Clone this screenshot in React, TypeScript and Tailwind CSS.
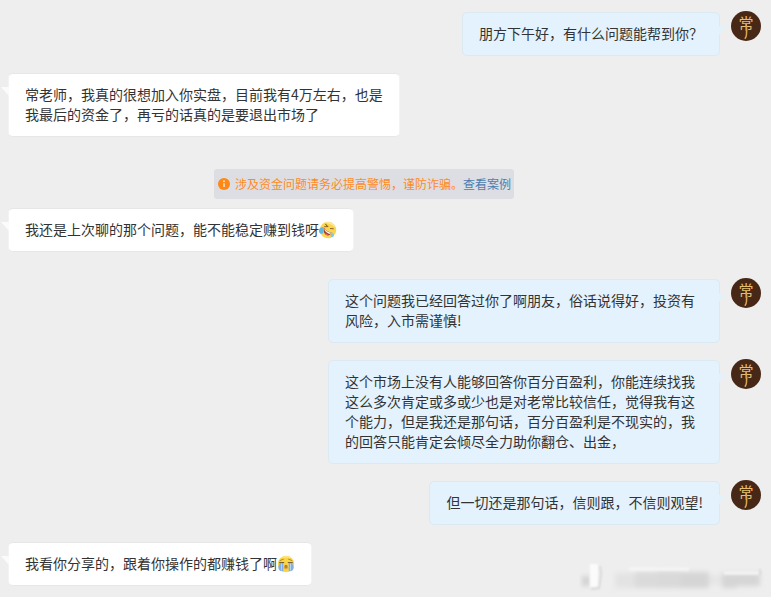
import type { ReactNode } from 'react'

type Item =
  | { kind: 'notice'; id: number }
  | { kind: 'message'; id: number; from: 'me' | 'visitor'; text: string; emoji?: 'rofl' | 'sob' }

const items: Item[] = [
  { kind: 'message', id: 1, from: 'me', text: '朋方下午好，有什么问题能帮到你？' },
  { kind: 'message', id: 2, from: 'visitor', text: '常老师，我真的很想加入你实盘，目前我有4万左右，也是我最后的资金了，再亏的话真的是要退出市场了' },
  { kind: 'notice', id: 3 },
  { kind: 'message', id: 4, from: 'visitor', text: '我还是上次聊的那个问题，能不能稳定赚到钱呀', emoji: 'rofl' },
  { kind: 'message', id: 5, from: 'me', text: '这个问题我已经回答过你了啊朋友，俗话说得好，投资有风险，入市需谨慎!' },
  { kind: 'message', id: 6, from: 'me', text: '这个市场上没有人能够回答你百分百盈利，你能连续找我这么多次肯定或多或少也是对老常比较信任，觉得我有这个能力，但是我还是那句话，百分百盈利是不现实的，我的回答只能肯定会倾尽全力助你翻仓、出金，' },
  { kind: 'message', id: 7, from: 'me', text: '但一切还是那句话，信则跟，不信则观望!' },
  { kind: 'message', id: 8, from: 'visitor', text: '我看你分享的，跟着你操作的都赚钱了啊', emoji: 'sob' },
]

function Rofl() {
  return (
    <svg className="inline-block size-[18px] align-[-4px]" viewBox="0 0 18 18" role="img" aria-label="笑cry">
      <g transform="rotate(24 9 9)">
        <circle cx="9" cy="9" r="8.2" fill="#fad64f" />
        <path d="M3 3.6A8 8 0 0 1 15 3.7C11 2.2 7 2.3 3 3.6z" fill="#fdeb98" />
        <path d="M4.6 4.8l2.7 1.2-2.8 1.4M10.6 6.6l2.8-.8" fill="none" stroke="#8a6128" strokeWidth="1" strokeLinecap="round" />
        <path d="M4.8 8.7c2.6 1.7 5.6 2.2 8.5 1.2.1 2.9-1.8 4.8-4.3 4.4-2.4-.4-4-2.6-4.2-5.6z" fill="#a3402a" />
        <path d="M5.4 9.2c2.2 1.4 4.9 1.9 7.5 1.1l-.3 1.4c-2.5.6-4.9 0-6.8-1.4z" fill="#fff" />
        <path d="M7.7 13.4c1-.8 2.6-.7 3.5.1-.9.9-2.4 1-3.5-.1z" fill="#ee6a57" />
        <path d="M4.3 8.6C2 8.5.3 10.3.8 12.8c.5 2.2 2.7 3.3 4.3 2 1.3-1.4.4-3.8-.8-6.2z" fill="#62b7dc" />
        <path d="M13.8 9.5c1.9.1 3.2 1.2 3 3-.2 1.5-1.9 2.1-2.9 1.1-.9-.9-.7-2.5-.1-4.1z" fill="#86c8e0" />
      </g>
    </svg>
  )
}

function Sob() {
  return (
    <svg className="inline-block size-[18px] align-[-4px]" viewBox="0 0 18 18" role="img" aria-label="泪">
      <circle cx="9" cy="9" r="8.2" fill="#fad549" />
      <path d="M3.5 3.3a8 8 0 0 1 11 0C11 2.1 7 2.1 3.5 3.3z" fill="#fde88a" />
      <path d="M3 5.6l3.4-1.4M15 5.6l-3.4-1.4" stroke="#9c7630" strokeWidth=".8" strokeLinecap="round" />
      <path d="M2.6 7.6h4.2M11.2 7.6h4.2" stroke="#6b5638" strokeWidth="1" strokeLinecap="round" />
      <path d="M2.6 8h3.7v8.2c-2.6.6-5-1-5-3.6C1.3 10.7 2.6 9.8 2.6 8zM15.4 8h-3.7v8.2c2.6.6 5-1 5-3.6 0-1.9-1.3-2.8-1.3-4.6z" fill="#82aee0" />
      <path d="M4.5 8.5v7M13.5 8.5v7" stroke="#b5d4ef" strokeWidth="1" />
      <ellipse cx="9" cy="12" rx="1.7" ry="2.3" fill="#b57c2c" />
      <path d="M7.8 13.3c.8-.6 1.6-.6 2.4 0-.5 1.2-1.9 1.2-2.4 0z" fill="#e9a050" />
    </svg>
  )
}

function Avatar() {
  return (
    <svg className="-mt-px ml-[11px] size-[30px] shrink-0 overflow-visible" viewBox="0 0 30 30" role="img" aria-label="老常">
      <circle cx="15" cy="15" r="15" fill="#472817" />
      <text x="15" y="18" textAnchor="middle" fontSize="15" fill="#e6be70" className="font-['Noto_Sans_CJK_SC',sans-serif]">
        常
      </text>
      <path d="M15.1 13c.5 3.500.7 7 .4 10.200-.1 1.700-.5 2.900-1.300 4" fill="none" stroke="#d9a54f" strokeWidth="1.5" strokeLinecap="round" />
    </svg>
  )
}

function Tail({ mine }: { mine: boolean }) {
  return (
    <svg
      className={mine ? 'absolute top-[13px] left-full h-[10px] w-2' : 'absolute top-[13px] right-full h-[10px] w-2'}
      viewBox="0 0 8 10"
      aria-hidden="true"
    >
      {mine ? <path d="M0 0h8L0 9z" fill="#e5f1f8" /> : <path d="M8 0H0l8 9z" fill="#fbfbfb" />}
    </svg>
  )
}

function Bubble({ mine, children }: { mine: boolean; children: ReactNode }) {
  const tone = mine ? 'border-[#dbe9f2] bg-[#e3f2fc]' : 'border-[#e7e7e7] border-x-[#f3f3f3] bg-white'
  return (
    <div className={`relative max-w-[392px] rounded-[5px] border px-4 pt-[10px] pb-3 ${tone}`}>
      <Tail mine={mine} />
      <p className="text-sm leading-5 text-[#333]">{children}</p>
    </div>
  )
}

function Notice() {
  return (
    <div className="mt-[15px] -mb-2 flex justify-center pr-[41px]">
      <div className="flex h-[30px] items-center rounded-[3px] bg-[#dddee3] pr-[3px] pl-1 text-xs text-[#ff8a1f]">
        <svg className="mr-[5px] size-3 shrink-0" viewBox="0 0 12 12" aria-hidden="true">
          <circle cx="6" cy="6" r="6" fill="#ff8712" />
          <path d="M6 5.3v3.8" stroke="#e9e2df" strokeWidth="1.6" />
          <circle cx="6" cy="3.3" r="1" fill="#e9e2df" />
        </svg>
        <span>涉及资金问题请务必提高警惕，谨防诈骗。</span>
        <a href="#" className="text-[#4c7dae]">查看案例</a>
      </div>
    </div>
  )
}

// smeared mark in the corner of the chat
function Watermark() {
  return (
    <svg className="pointer-events-none absolute right-1 bottom-0.5 h-8 w-[188px]" viewBox="0 0 188 32" aria-hidden="true">
      <defs>
        <filter id="soft" x="-10%" y="-40%" width="120%" height="180%">
          <feGaussianBlur stdDeviation="2.5" />
        </filter>
        <filter id="edge" x="-30%" y="-60%" width="160%" height="220%">
          <feGaussianBlur stdDeviation="1" />
        </filter>
      </defs>
      <g filter="url(#soft)">
        <path d="M3 13h8v10H3z" fill="#d2d2d2" />
        <path d="M36 10h20v15H36z" fill="#e3e3e3" />
        <path d="M56 9h22v16H56z" fill="#dadada" />
        <path d="M78 8h24v17H78z" fill="#d9d9d9" />
        <path d="M102 9h28v16h-28z" fill="#d5d5d5" />
        <path d="M130 12h13v10h-13z" fill="#e6e6e6" />
        <path d="M143 10h15v15h-15z" fill="#d5d5d5" />
        <path d="M158 10h23v13h-23z" fill="#d5d5d5" />
      </g>
      <g filter="url(#edge)">
        <path d="M21 3l1 8-2 14-8 1" fill="none" stroke="#d0d0d0" strokeWidth="1.5" />
        <path d="M11 1h8v23h-8z" fill="#fbfbfb" />
        <path d="M50 6h60M145 10h35" stroke="#f6f6f6" strokeWidth="3" />
        <path d="M181 6v6" stroke="#c4c4c4" strokeWidth="1" />
      </g>
    </svg>
  )
}

export default function App() {
  return (
    <main className="relative flex min-h-screen flex-col gap-[17px] bg-[#eee] pt-3 pr-[10px] pb-[11px] pl-2 font-['Noto_Sans_CJK_SC',sans-serif]">
      {items.map(item => {
        if (item.kind === 'notice') return <Notice key={item.id} />
        const mine = item.from === 'me'
        return (
          <div
            key={item.id}
            className={mine ? 'flex items-start justify-end [:not(.justify-end)+&]:mt-[10px]' : 'flex items-start'}
          >
            <Bubble mine={mine}>
              {item.text}
              {item.emoji === 'rofl' && <Rofl />}
              {item.emoji === 'sob' && <Sob />}
            </Bubble>
            {mine && <Avatar />}
          </div>
        )
      })}
      <Watermark />
    </main>
  )
}
